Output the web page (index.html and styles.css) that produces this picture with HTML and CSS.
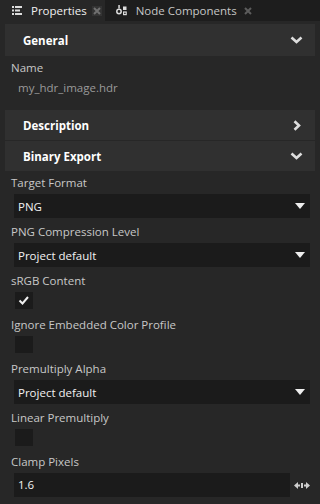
FILE: index.html
```html
<!DOCTYPE html>
<html lang="en">
<head>
    <meta charset="UTF-8">
    <meta name="viewport" content="width=device-width, initial-scale=1.0">
    <title>Properties</title>
    <link rel="stylesheet" href="styles.css">
</head>
<body>
<div class="tabbar">
    <div class="tab active">
        <svg class="tab-icon" width="10" height="9" viewBox="0 0 10 9">
            <rect x="0" y="0" width="2" height="2" fill="#ddd"/>
            <rect x="3" y="0" width="7" height="2" fill="#ddd"/>
            <rect x="0" y="3.5" width="2" height="2" fill="#ddd"/>
            <rect x="3" y="3.5" width="5" height="2" fill="#ddd"/>
            <rect x="0" y="7" width="2" height="2" fill="#ddd"/>
            <rect x="3" y="7" width="7" height="2" fill="#ddd"/>
        </svg>
        <span class="tab-title">Properties</span>
        <span class="tab-close boxed">
            <svg width="8" height="8" viewBox="0 0 8 8"><path d="M1 1L7 7M7 1L1 7" stroke="#707070" stroke-width="2"/></svg>
        </span>
    </div>
    <div class="tab">
        <svg class="tab-icon" width="11" height="11" viewBox="0 0 11 11">
            <circle cx="3" cy="6.5" r="2.2" fill="none" stroke="#ddd" stroke-width="1.5"/>
            <rect x="2.3" y="0" width="1.5" height="3.5" fill="#ddd"/>
            <rect x="7" y="1.5" width="3.5" height="3.5" fill="#ddd"/>
            <rect x="7.6" y="7" width="2.6" height="2.6" fill="none" stroke="#ddd" stroke-width="1.2"/>
        </svg>
        <span class="tab-title">Node Components</span>
        <span class="tab-close">
            <svg width="8" height="8" viewBox="0 0 8 8"><path d="M1 1L7 7M7 1L1 7" stroke="#5c5c5c" stroke-width="2"/></svg>
        </span>
    </div>
</div>

<div class="panel">
    <!-- General -->
    <div class="section-header first">
        <span>General</span>
        <svg width="13" height="8" viewBox="0 0 13 8"><polyline points="1.5,1.5 6.5,6 11.5,1.5" fill="none" stroke="#ddd" stroke-width="2.6"/></svg>
    </div>
    <div class="section-body general">
        <div class="label">Name</div>
        <div class="value-text">my_hdr_image.hdr</div>
    </div>

    <!-- Description -->
    <div class="section-header">
        <span>Description</span>
        <svg class="chev-right" width="8" height="11" viewBox="0 0 8 11"><polyline points="1.5,1.2 6,5.5 1.5,9.8" fill="none" stroke="#ddd" stroke-width="2.6"/></svg>
    </div>

    <!-- Binary Export -->
    <div class="section-header">
        <span>Binary Export</span>
        <svg width="13" height="8" viewBox="0 0 13 8"><polyline points="1.5,1.5 6.5,6 11.5,1.5" fill="none" stroke="#ddd" stroke-width="2.6"/></svg>
    </div>
    <div class="section-body">
        <div class="field">
            <div class="label">Target Format</div>
            <div class="dropdown">
                <span>PNG</span>
                <svg width="10" height="6" viewBox="0 0 10 6"><polygon points="0,0 10,0 5,6" fill="#eee"/></svg>
            </div>
        </div>
        <div class="field">
            <div class="label">PNG Compression Level</div>
            <div class="dropdown">
                <span>Project default</span>
                <svg width="10" height="6" viewBox="0 0 10 6"><polygon points="0,0 10,0 5,6" fill="#eee"/></svg>
            </div>
        </div>
        <div class="field">
            <div class="label">sRGB Content</div>
            <div class="check-row">
                <div class="checkbox">
                    <svg width="18" height="17" viewBox="0 0 18 17"><polyline points="4.5,8.5 7.5,11.5 13,5" fill="none" stroke="#f0f0f0" stroke-width="2"/></svg>
                </div>
            </div>
        </div>
        <div class="field">
            <div class="label">Ignore Embedded Color Profile</div>
            <div class="check-row"><div class="checkbox"></div></div>
        </div>
        <div class="field">
            <div class="label">Premultiply Alpha</div>
            <div class="dropdown">
                <span>Project default</span>
                <svg width="10" height="6" viewBox="0 0 10 6"><polygon points="0,0 10,0 5,6" fill="#eee"/></svg>
            </div>
        </div>
        <div class="field">
            <div class="label">Linear Premultiply</div>
            <div class="check-row"><div class="checkbox"></div></div>
        </div>
        <div class="field">
            <div class="label">Clamp Pixels</div>
            <div class="number-row">
                <div class="number-input">1.6</div>
                <svg class="drag-icon" width="16" height="7" viewBox="0 0 16 7">
                    <polygon points="0,3.5 4,0 4,7" fill="#cfcfcf"/>
                    <rect x="4" y="2.5" width="2" height="2" fill="#cfcfcf"/>
                    <rect x="7" y="1" width="2" height="5" fill="#cfcfcf"/>
                    <rect x="10" y="2.5" width="2" height="2" fill="#cfcfcf"/>
                    <polygon points="16,3.5 12,0 12,7" fill="#cfcfcf"/>
                </svg>
            </div>
        </div>
    </div>
</div>
</body>
</html>
```

FILE: styles.css
```css
body {
    margin: 0;
    padding: 0;
    width: 320px;
    height: 504px;
    overflow: hidden;
    background-color: #272727;
    font-family: "Open Sans", "Noto Sans", sans-serif;
    font-size: 11.5px;
    color: #c8c8c8;
}

/* Tab strip */
.tabbar {
    display: flex;
    height: 21px;
    background-color: #1d1d1d;
}

.tab {
    display: flex;
    align-items: center;
    padding: 0 8px 0 11px;
    color: #c6c6c6;
    font-size: 11.5px;
}

.tab.active {
    background-color: #272727;
    color: #f0f0f0;
    padding: 0 3px 0 12px;
}

.tab-icon {
    margin-right: 9px;
}

.tab-close {
    display: flex;
    align-items: center;
    justify-content: center;
    width: 10px;
    height: 10px;
    margin-left: 6px;
}

.tab-close.boxed {
    background-color: #333;
    margin-left: 5px;
}

/* Panel */
.panel {
    padding: 3px 5px 0 5px;
}

.section-header {
    display: flex;
    align-items: center;
    justify-content: space-between;
    height: 30px;
    padding: 0 12px 0 18px;
    margin-bottom: 1px;
    background-color: #303030;
    color: #fff;
    font-weight: bold;
}

.section-header.first {
    height: 32px;
}

.chev-right {
    margin-right: 2px;
}

.section-body {
    padding: 3px 5px 0 6px;
    margin-bottom: -1px;
}

.section-body.general {
    padding-bottom: 13px;
}

.label {
    height: 16px;
    line-height: 16px;
    color: #c8c8c8;
}

.value-text {
    margin-top: 2px;
    padding-left: 7px;
    height: 20px;
    line-height: 20px;
    color: #9a9a9a;
}

.field {
    margin-bottom: 6px;
}

.field .label {
    margin-bottom: 3px;
}

.dropdown {
    display: flex;
    align-items: center;
    justify-content: space-between;
    height: 24px;
    margin-left: 3px;
    padding: 0 5px 0 4px;
    background-color: #1b1b1b;
    color: #f2f2f2;
}

.check-row {
    height: 19px;
    padding-left: 4px;
}

.checkbox {
    width: 18px;
    height: 17px;
    margin-top: 1px;
    background-color: #1b1b1b;
}

.checkbox svg {
    display: block;
}

.number-row {
    display: flex;
    align-items: center;
    margin-left: 3px;
}

.number-input {
    flex: 1;
    height: 24px;
    line-height: 24px;
    padding-left: 4px;
    background-color: #1b1b1b;
    color: #f2f2f2;
}

.drag-icon {
    margin-left: 4px;
}
```
